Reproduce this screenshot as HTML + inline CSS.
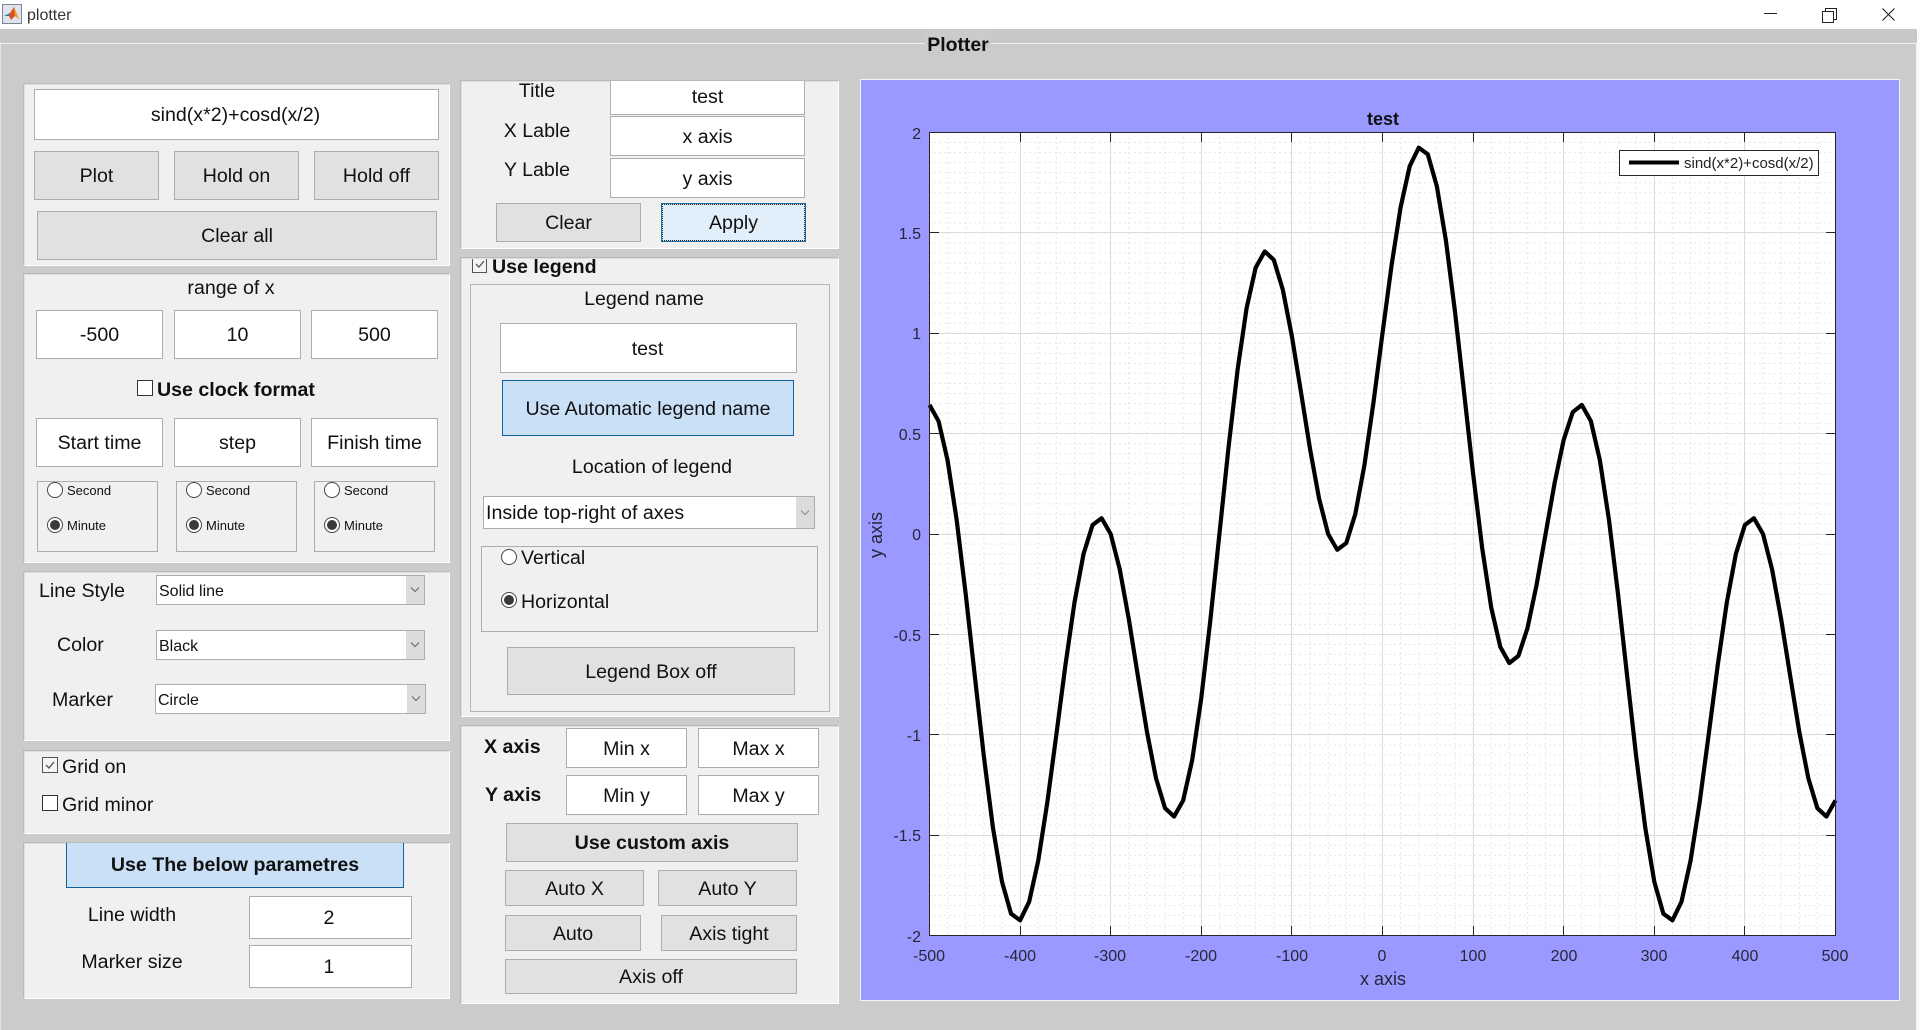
<!DOCTYPE html>
<html>
<head>
<meta charset="utf-8">
<title>plotter</title>
<style>
html,body{margin:0;padding:0;width:1920px;height:1030px;overflow:hidden;background:#cbcbcb;font-family:"Liberation Sans",Arial,sans-serif;color:#111}
*{box-sizing:border-box}
.a,.p,.i,.b,.t,.g,.d,.c,.r,.l,.u{position:absolute}
.p{background:#f0f0f0;border:1px solid;border-color:#dedede #fff #fff #dedede;box-shadow:-1px -1px 0 #b9b9b9}
.i,.b,.u{display:flex;align-items:center;justify-content:center;font-size:19.6px;white-space:nowrap;padding-top:2px}
.i{background:#fff;border:1px solid #adadad}
.b{background:#e1e1e1;border:1px solid #adadad}
.u{background:#c9e0f7;border:1px solid #14639f}
.t,.l{font-size:19.6px;white-space:nowrap;line-height:30px;height:30px;margin-top:1px}
.t{width:300px;text-align:center}
.s{font-weight:bold}
.g{border:1px solid #adadad}
.d{background:#fff;border:1px solid #adadad;font-size:16px;line-height:32px;padding-left:2px;white-space:nowrap}
.d:after{content:"";position:absolute;right:0;top:0;bottom:0;width:18px;background:#dcdcdc}
.d svg{position:absolute;right:4px;top:10px;z-index:1}
.c{width:16px;height:16px;background:#fff;border:1px solid #333}
.c.k{background:#f4f4f4;border-color:#555}
.c svg{position:absolute;left:1px;top:1px}
.r{width:16px;height:16px;border-radius:50%;background:#fff;border:1px solid #444}
.r.o:after{content:"";position:absolute;left:2px;top:2px;width:10px;height:10px;border-radius:50%;background:#3a3a3a}
.l.m{font-size:13px}
svg text{font-family:"Liberation Sans",Arial,sans-serif;fill:#262638}
</style>
</head>
<body>
<!-- title bar -->
<div class="a" style="left:0;top:0;width:1920px;height:29px;background:#fff"></div>
<div class="a" style="left:0;top:29px;width:1920px;height:14px;background:#c8c8c8"></div>
<div class="a" style="left:0;top:43px;width:1917px;height:1px;background:#f2f2f2"></div>
<div class="a" style="left:0;top:44px;width:1px;height:986px;background:#e4e4e4"></div>
<div class="a" style="left:1916px;top:44px;width:1px;height:986px;background:#f2f2f2"></div>
<div class="a" style="left:1917px;top:29px;width:3px;height:1001px;background:#fafafa"></div>
<svg class="a" style="left:2px;top:4px" width="20" height="20" viewBox="0 0 20 20">
<rect x="0.5" y="0.5" width="19" height="19" fill="#dfe4ec" stroke="#7a8598"/>
<path d="M2 12 L8 9 L12 3 L17 15 L13 12 L9 16 L7 12 Z" fill="#d9531e"/>
<path d="M2 12 L8 9 L7 12 Z" fill="#3c78b5"/>
<path d="M12 3 L17 15 L13 12 Z" fill="#f0a22e"/>
</svg>
<div class="l" style="left:27px;top:0;font-size:16px;color:#333">plotter</div>
<svg class="a" style="left:1760px;top:4px" width="150" height="20" viewBox="0 0 150 20" fill="none" stroke="#222" stroke-width="1">
<path d="M4 9.5H17"/>
<path d="M62.5 7.5H73.5V18.5H62.5Z M65.5 7.5V4.5H76.5V15.5H73.5"/>
<path d="M122.5 4.5L134.5 16.5M134.5 4.5L122.5 16.5" stroke-width="1.1"/>
</svg>
<div class="a s" style="left:925px;top:30px;width:66px;height:30px;line-height:30px;text-align:center;font-size:19.4px;font-weight:bold;background:#cbcbcb">Plotter</div>

<!-- panel 1 -->
<div class="p" style="left:24px;top:84px;width:426px;height:182px"></div>
<div class="i" style="left:34px;top:89px;width:405px;height:51px;padding-right:2px">sind(x*2)+cosd(x/2)</div>
<div class="b" style="left:34px;top:151px;width:125px;height:49px">Plot</div>
<div class="b" style="left:174px;top:151px;width:125px;height:49px">Hold on</div>
<div class="b" style="left:314px;top:151px;width:125px;height:49px">Hold off</div>
<div class="b" style="left:37px;top:211px;width:400px;height:49px">Clear all</div>

<!-- panel 2 -->
<div class="p" style="left:24px;top:274px;width:426px;height:289px"></div>
<div class="t" style="left:81px;top:272px">range of x</div>
<div class="i" style="left:36px;top:310px;width:127px;height:49px">-500</div>
<div class="i" style="left:174px;top:310px;width:127px;height:49px">10</div>
<div class="i" style="left:311px;top:310px;width:127px;height:49px">500</div>
<div class="c" style="left:137px;top:380px"></div>
<div class="l s" style="left:157px;top:374px">Use clock format</div>
<div class="i" style="left:36px;top:418px;width:127px;height:49px">Start time</div>
<div class="i" style="left:174px;top:418px;width:127px;height:49px">step</div>
<div class="i" style="left:311px;top:418px;width:127px;height:49px">Finish time</div>
<div class="g" style="left:37px;top:481px;width:121px;height:71px"></div>
<div class="g" style="left:176px;top:481px;width:121px;height:71px"></div>
<div class="g" style="left:314px;top:481px;width:121px;height:71px"></div>
<div class="r" style="left:47px;top:482px"></div><div class="l m" style="left:67px;top:475px">Second</div>
<div class="r o" style="left:47px;top:517px"></div><div class="l m" style="left:67px;top:510px">Minute</div>
<div class="r" style="left:186px;top:482px"></div><div class="l m" style="left:206px;top:475px">Second</div>
<div class="r o" style="left:186px;top:517px"></div><div class="l m" style="left:206px;top:510px">Minute</div>
<div class="r" style="left:324px;top:482px"></div><div class="l m" style="left:344px;top:475px">Second</div>
<div class="r o" style="left:324px;top:517px"></div><div class="l m" style="left:344px;top:510px">Minute</div>

<!-- panel 3 -->
<div class="p" style="left:24px;top:572px;width:426px;height:169px"></div>
<div class="l" style="left:39px;top:575px">Line Style</div>
<div class="l" style="left:57px;top:629px">Color</div>
<div class="l" style="left:52px;top:684px">Marker</div>
<div class="d" style="left:156px;top:575px;width:269px;height:30px">Solid line<svg width="10" height="8" viewBox="0 0 10 8"><path d="M1 1.5L5 5.5L9 1.5" fill="none" stroke="#666"/></svg></div>
<div class="d" style="left:156px;top:630px;width:269px;height:30px">Black<svg width="10" height="8" viewBox="0 0 10 8"><path d="M1 1.5L5 5.5L9 1.5" fill="none" stroke="#666"/></svg></div>
<div class="d" style="left:155px;top:684px;width:271px;height:30px">Circle<svg width="10" height="8" viewBox="0 0 10 8"><path d="M1 1.5L5 5.5L9 1.5" fill="none" stroke="#666"/></svg></div>

<!-- panel 4 -->
<div class="p" style="left:24px;top:751px;width:426px;height:83px"></div>
<div class="c k" style="left:42px;top:757px"><svg width="12" height="12" viewBox="0 0 12 12"><path d="M2 6L5 9L10 3" fill="none" stroke="#555" stroke-width="1.3"/></svg></div>
<div class="l" style="left:62px;top:751px">Grid on</div>
<div class="c" style="left:42px;top:795px"></div>
<div class="l" style="left:62px;top:789px">Grid minor</div>

<!-- panel 5 -->
<div class="p" style="left:24px;top:843px;width:426px;height:156px"></div>
<div class="u s" style="left:66px;top:843px;width:338px;height:45px;border-top:0;padding-top:0">Use The below parametres</div>
<div class="t" style="left:-18px;top:899px">Line width</div>
<div class="t" style="left:-18px;top:946px">Marker size</div>
<div class="i" style="left:249px;top:896px;width:163px;height:43px;padding-right:3px">2</div>
<div class="i" style="left:249px;top:945px;width:163px;height:43px;padding-right:3px">1</div>

<!-- panel 6 -->
<div class="p" style="left:461px;top:81px;width:378px;height:168px"></div>
<div class="t" style="left:387px;top:75px">Title</div>
<div class="t" style="left:387px;top:115px">X Lable</div>
<div class="t" style="left:387px;top:154px">Y Lable</div>
<div class="i" style="left:610px;top:81px;width:195px;height:34px;border-top:0;padding-top:0">test</div>
<div class="i" style="left:610px;top:116px;width:195px;height:40px;padding-top:3px">x axis</div>
<div class="i" style="left:610px;top:158px;width:195px;height:40px;padding-top:3px">y axis</div>
<div class="b" style="left:496px;top:203px;width:145px;height:39px">Clear</div>
<div class="b" style="left:661px;top:203px;width:145px;height:39px;background:#e1effb;border-color:#1a6ea8;outline:1px dotted #222;outline-offset:-2px">Apply</div>

<!-- panel 7 -->
<div class="p" style="left:461px;top:258px;width:378px;height:459px"></div>
<div class="c k" style="left:472px;top:259px;height:14px;width:15px;border-top:0;border-color:#555"><svg width="12" height="12" viewBox="0 0 12 12" style="top:-1px"><path d="M2 6L5 9L10 3" fill="none" stroke="#555" stroke-width="1.3"/></svg></div>
<div class="l s" style="left:492px;top:251px">Use legend</div>
<div class="g" style="left:470px;top:284px;width:360px;height:428px;border-color:#b5b5b5"></div>
<div class="t" style="left:494px;top:283px">Legend name</div>
<div class="i" style="left:500px;top:323px;width:297px;height:50px;padding-right:2px">test</div>
<div class="u" style="left:502px;top:380px;width:292px;height:56px">Use Automatic legend name</div>
<div class="t" style="left:502px;top:451px">Location of legend</div>
<div class="d" style="left:483px;top:496px;width:332px;height:33px;font-size:19.6px;line-height:32px;padding-left:2px">Inside top-right of axes<svg width="10" height="8" viewBox="0 0 10 8" style="top:12px"><path d="M1 1.5L5 5.5L9 1.5" fill="none" stroke="#888"/></svg></div>
<div class="g" style="left:481px;top:546px;width:337px;height:86px"></div>
<div class="r" style="left:501px;top:549px"></div>
<div class="l" style="left:521px;top:542px">Vertical</div>
<div class="r o" style="left:501px;top:592px"></div>
<div class="l" style="left:521px;top:586px">Horizontal</div>
<div class="b" style="left:507px;top:647px;width:288px;height:48px">Legend Box off</div>

<!-- panel 8 -->
<div class="p" style="left:461px;top:726px;width:378px;height:278px"></div>
<div class="l s" style="left:484px;top:731px">X axis</div>
<div class="l s" style="left:485px;top:779px">Y axis</div>
<div class="i" style="left:566px;top:728px;width:121px;height:40px">Min x</div>
<div class="i" style="left:698px;top:728px;width:121px;height:40px">Max x</div>
<div class="i" style="left:566px;top:775px;width:121px;height:40px">Min y</div>
<div class="i" style="left:698px;top:775px;width:121px;height:40px">Max y</div>
<div class="b s" style="left:506px;top:823px;width:292px;height:39px">Use custom axis</div>
<div class="b" style="left:505px;top:870px;width:139px;height:36px">Auto X</div>
<div class="b" style="left:658px;top:870px;width:139px;height:36px">Auto Y</div>
<div class="b" style="left:505px;top:915px;width:136px;height:36px">Auto</div>
<div class="b" style="left:661px;top:915px;width:136px;height:36px">Axis tight</div>
<div class="b" style="left:505px;top:959px;width:292px;height:35px">Axis off</div>

<!-- plot -->
<svg class="a" style="left:0;top:0" width="1920" height="1030" viewBox="0 0 1920 1030">
<defs>
<pattern id="mx" x="929" y="132" width="18.12" height="803" patternUnits="userSpaceOnUse"><path d="M.5 0V803" stroke="#e6e6e6" stroke-width="1" stroke-dasharray="2 3"/></pattern>
<pattern id="my" x="929" y="132" width="906" height="10.04" patternUnits="userSpaceOnUse"><path d="M0 .5H906" stroke="#e6e6e6" stroke-width="1" stroke-dasharray="2 3"/></pattern>
</defs>
<rect x="860.5" y="79.5" width="1039" height="921" fill="#9999ff" stroke="#f4f4f4"/>
<rect x="929.5" y="132.5" width="906" height="803" fill="#fff"/>
<rect x="929.5" y="132.5" width="906" height="803" fill="url(#mx)"/>
<rect x="929.5" y="132.5" width="906" height="803" fill="url(#my)"/>
<path d="M1020.5 132V935M1110.5 132V935M1201.5 132V935M1291.5 132V935M1382.5 132V935M1473.5 132V935M1563.5 132V935M1654.5 132V935M1744.5 132V935M930 232.5H1835M930 333.5H1835M930 433.5H1835M930 534.5H1835M930 634.5H1835M930 734.5H1835M930 835.5H1835" stroke="#dcdcdc" fill="none"/>
<polyline transform="translate(1382.5 534) scale(.906 -200.75)" vector-effect="non-scaling-stroke" fill="none" stroke="#000" stroke-width="4.2" stroke-linejoin="round" points="-500,.6428 -490,.5622 -480,.366 -470,.0692 -460,-.3008 -450,-.7071 -440,-1.108 -430,-1.462 -420,-1.732 -410,-1.8911 -400,-1.9245 -390,-1.8319 -380,-1.6276 -370,-1.3382 -360,-1 -350,-.6542 -340,-.342 -330,-.0999 -320,.0451 -310,.0785 -300,0 -290,-.1764 -280,-.424 -270,-.7071 -260,-.9848 -250,-1.2164 -240,-1.366 -230,-1.4074 -220,-1.3268 -210,-1.1248 -200,-.8164 -190,-.4292 -180,0 -170,.4292 -160,.8164 -150,1.1248 -140,1.3268 -130,1.4074 -120,1.366 -110,1.2164 -100,.9848 -90,.7071 -80,.424 -70,.1764 -60,0 -50,-.0785 -40,-.0451 -30,.0999 -20,.342 -10,.6542 0,1 10,1.3382 20,1.6276 30,1.8319 40,1.9245 50,1.8911 60,1.732 70,1.462 80,1.108 90,.7071 100,.3008 110,-.0692 120,-.366 130,-.5622 140,-.6428 150,-.6072 160,-.4692 170,-.2548 180,0 190,.2548 200,.4692 210,.6072 220,.6428 230,.5622 240,.366 250,.0692 260,-.3008 270,-.7071 280,-1.108 290,-1.462 300,-1.732 310,-1.8911 320,-1.9245 330,-1.8319 340,-1.6276 350,-1.3382 360,-1 370,-.6542 380,-.342 390,-.0999 400,.0451 410,.0785 420,0 430,-.1764 440,-.424 450,-.7071 460,-.9848 470,-1.2164 480,-1.366 490,-1.4074 500,-1.3268"/>
<rect x="929.5" y="132.5" width="906" height="803" fill="none" stroke="#262626"/>
<path d="M1020.5 132V142M1110.5 132V142M1201.5 132V142M1291.5 132V142M1382.5 132V142M1473.5 132V142M1563.5 132V142M1654.5 132V142M1744.5 132V142M1020.5 935V926M1110.5 935V926M1201.5 935V926M1291.5 935V926M1382.5 935V926M1473.5 935V926M1563.5 935V926M1654.5 935V926M1744.5 935V926M930 232.5H939M930 333.5H939M930 433.5H939M930 534.5H939M930 634.5H939M930 734.5H939M930 835.5H939M1835 232.5H1826M1835 333.5H1826M1835 433.5H1826M1835 534.5H1826M1835 634.5H1826M1835 734.5H1826M1835 835.5H1826" stroke="#262626" fill="none"/>
<g font-size="16" text-anchor="end">
<text x="921" y="139">2</text>
<text x="921" y="239">1.5</text>
<text x="921" y="339">1</text>
<text x="921" y="440">0.5</text>
<text x="921" y="540">0</text>
<text x="921" y="641">-0.5</text>
<text x="921" y="741">-1</text>
<text x="921" y="841">-1.5</text>
<text x="921" y="942">-2</text>
</g>
<g font-size="16" text-anchor="middle">
<text x="929" y="961">-500</text>
<text x="1020" y="961">-400</text>
<text x="1110" y="961">-300</text>
<text x="1201" y="961">-200</text>
<text x="1292" y="961">-100</text>
<text x="1382" y="961">0</text>
<text x="1473" y="961">100</text>
<text x="1564" y="961">200</text>
<text x="1654" y="961">300</text>
<text x="1745" y="961">400</text>
<text x="1835" y="961">500</text>
</g>
<text x="1383" y="125" font-size="18" font-weight="bold" text-anchor="middle" style="fill:#111">test</text>
<text x="1383" y="985" font-size="18" text-anchor="middle">x axis</text>
<text transform="translate(882 535) rotate(-90)" font-size="18" text-anchor="middle">y axis</text>
<rect x="1619.5" y="150.5" width="199" height="25" fill="#fff" stroke="#262626"/>
<path d="M1629 162.5H1679" stroke="#000" stroke-width="4"/>
<text x="1684" y="168" font-size="15" style="fill:#222">sind(x*2)+cosd(x/2)</text>
</svg>
</body>
</html>
